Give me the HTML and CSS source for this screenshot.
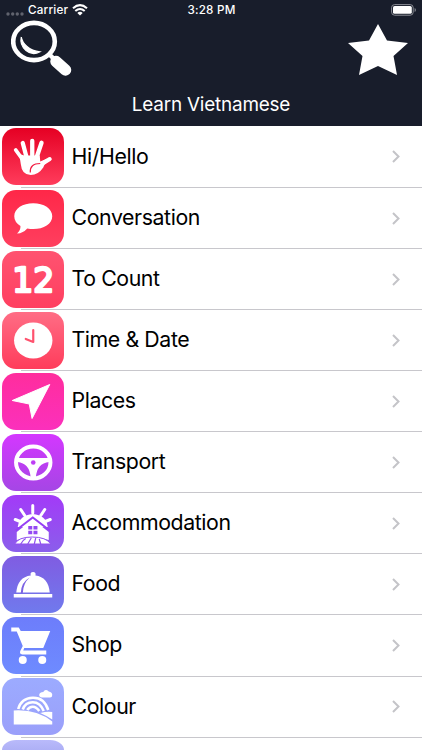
FILE: index.html
```html
<!DOCTYPE html>
<html lang="en">
<head>
  <meta charset="UTF-8" />
  <meta name="viewport" content="width=device-width, initial-scale=1.0"/>
  <title>Learn Vietnamese</title>
  <link rel="stylesheet" href="styles.css">
</head>
<body>
  <header class="header">
    <div class="status">
      <div class="status-left">
        <svg class="signal" width="18" height="4" viewBox="0 0 18 4"><circle cx="2" cy="2" r="1.7"/><circle cx="6.7" cy="2" r="1.7"/><circle cx="11.3" cy="2" r="1.7"/><circle cx="16" cy="2" r="1.7"/></svg>
        <span class="carrier">Carrier</span>
        <svg class="wifi" width="16" height="12" viewBox="0 0 16 12"><path d="M1 4.2Q8-1.8 15 4.2M3.3 7Q8 3 12.7 7" fill="none" stroke="#fff" stroke-width="2.1"/><path d="M5.3 8.9Q8 6.6 10.7 8.9L8 11.6Z" fill="#fff"/></svg>
      </div>
      <span class="time">3:28 PM</span>
      <svg class="battery" width="26" height="12" viewBox="0 0 26 12"><rect x=".6" y=".6" width="21.6" height="10.6" rx="3" fill="none" stroke="#8b8d95"/><rect x="2" y="2" width="18.8" height="7.8" rx="1.6" fill="#fff"/><path d="M23.6 4v4q1.3-.6 1.3-2t-1.3-2" fill="#8b8d95"/></svg>
    </div>
    <div class="actions">
      <svg width="62" height="56" viewBox="0 0 62 56"><ellipse cx="23" cy="21.5" rx="20.8" ry="18.6" fill="none" stroke="#fff" stroke-width="4.6"/><path d="M10.3 17Q8.5 25 15 30.5T29 31.8Q21 31 16 26.5T10.3 17" fill="#fff" stroke="#fff" stroke-width="1.2"/><path d="M37 33L42 38" stroke="#fff" stroke-width="4.5"/><path d="M45 41.5L54.5 50" stroke="#fff" stroke-width="11.5" stroke-linecap="round"/></svg>
      <svg class="star" width="62" height="52" viewBox="0 0 62 52"><path d="M31 0L40 16.5L61 19L46.5 32L50 51L31 42L12 51L15.5 32L1 19L22 16.5Z" fill="#fff"/></svg>
    </div>
    <h1>Learn Vietnamese</h1>
  </header>

  <main class="list">
    <div class="row">
      <div class="icon hello">
        <svg viewBox="0 0 61 57"><g stroke="#fff" fill="none" stroke-linecap="round"><path d="M20 31L13.5 22" stroke-width="3.8"/><path d="M24.500 30L20.5 15M30 28V12.8M34.5 29L39.300 14.8" stroke-width="4.3"/><path d="M38 37L47.5 31" stroke-width="4"/></g><path d="M17 26L22 27.5H37.5L38 33.5L45 30.5L41 39.5Q36 47 28.5 47Q19.5 47 18.5 36Z" fill="#fff"/><path d="M28 44.5Q27.5 35.5 38 35.5" fill="none" stroke="#f21c42" stroke-width="1.2"/></svg>
      </div>
      <span class="label">Hi/Hello</span>
      <svg class="chevron" viewBox="0 0 8 13"><path d="M1 1L6.5 6.5L1 12"/></svg>
    </div>
    <div class="row">
      <div class="icon conversation">
        <svg viewBox="0 0 61 57"><path d="M31 13.2C41.5 13.2 50 18.5 50 26.2S41.5 39 31 39Q28 39 25 38.4Q21 43 14.8 43.6Q18.5 40 18.2 36Q12 32 12 26.2C12 18.5 20.5 13.2 31 13.2Z" fill="#fff"/></svg>
      </div>
      <span class="label">Conversation</span>
      <svg class="chevron" viewBox="0 0 8 13"><path d="M1 1L6.5 6.5L1 12"/></svg>
    </div>
    <div class="row">
      <div class="icon count">
        <svg viewBox="0 0 61 57"><text x="10" y="40.5">12</text></svg>
      </div>
      <span class="label">To Count</span>
      <svg class="chevron" viewBox="0 0 8 13"><path d="M1 1L6.5 6.5L1 12"/></svg>
    </div>
    <div class="row">
      <div class="icon clock">
        <svg viewBox="0 0 61 57"><ellipse cx="31" cy="28.5" rx="19.2" ry="18" fill="#fff"/><path d="M31 18V30L23.5 27" fill="none" stroke="#ff526e" stroke-width="2.2" stroke-linecap="round" stroke-linejoin="round"/></svg>
      </div>
      <span class="label">Time &amp; Date</span>
      <svg class="chevron" viewBox="0 0 8 13"><path d="M1 1L6.5 6.5L1 12"/></svg>
    </div>
    <div class="row">
      <div class="icon places">
        <svg viewBox="0 0 61 57"><path d="M47.5 11.5L29.8 45.500L27 31L10 27.5Z" fill="#fff" stroke="#fff" stroke-linejoin="round"/></svg>
      </div>
      <span class="label">Places</span>
      <svg class="chevron" viewBox="0 0 8 13"><path d="M1 1L6.5 6.5L1 12"/></svg>
    </div>
    <div class="row">
      <div class="icon transport">
        <svg viewBox="0 0 61 57"><ellipse cx="31" cy="28.5" rx="17.2" ry="16" fill="none" stroke="#fff" stroke-width="4"/><path d="M15 24H47V28Q34.5 29 33.5 44H28.500Q27.5 29 15 28Z" fill="#fff"/><circle cx="31" cy="28.500" r="2.3" fill="#bd3df4"/></svg>
      </div>
      <span class="label">Transport</span>
      <svg class="chevron" viewBox="0 0 8 13"><path d="M1 1L6.5 6.5L1 12"/></svg>
    </div>
    <div class="row">
      <div class="icon accommodation">
        <svg viewBox="0 0 61 57"><path d="M30.5 18V10.5M22.5 20.5L18.5 14.5M38.5 20.5L42.5 14.5M18 26.5L13 24.5M43 26.5L48 24.5" stroke="#fff" stroke-width="3" stroke-linecap="round"/><path d="M15.5 32Q17 20 30.5 19Q44 20 45.5 32Z" fill="#fff"/><path d="M13.5 35.5L30.5 22.5L47.5 35.5" fill="none" stroke="#963ff5" stroke-width="2"/><path d="M14.5 37L30.5 24.5L46.5 37V45Q31 39.5 14.5 45Z" fill="#fff"/><path d="M26 31h4v3.5h-4zM31.2 31h4v3.5h-4zM26 35.8h4v3.5h-4zM31.2 35.8h4v3.5h-4z" fill="#9449f3"/><path d="M12.5 49Q16 42 30 42T48.5 49Z" fill="#fff" stroke="#9150f0" stroke-width="1"/><path d="M18.5 49Q20 45.5 23.5 43.5M25.5 49L29 43M32 49L33.5 43M38.5 49L37 44" fill="none" stroke="#9150f0" stroke-width="1.2"/></svg>
      </div>
      <span class="label">Accommodation</span>
      <svg class="chevron" viewBox="0 0 8 13"><path d="M1 1L6.5 6.5L1 12"/></svg>
    </div>
    <div class="row">
      <div class="icon food">
        <svg viewBox="0 0 61 57"><path d="M11.5 38H50V41.5H11.5ZM14 36.5Q15.5 21 28.5 19.5Q27.5 16 30.8 16T33.2 19.5Q46 21 47.5 36.5Z" fill="#fff"/><path d="M18.5 37Q19 26 27.5 21.5Q21 27 20.5 37Z" fill="#7b62e3"/></svg>
      </div>
      <span class="label">Food</span>
      <svg class="chevron" viewBox="0 0 8 13"><path d="M1 1L6.5 6.5L1 12"/></svg>
    </div>
    <div class="row">
      <div class="icon shop">
        <svg viewBox="0 0 61 57"><path d="M9 10.5H16.5L18.5 14H48L41 31H22L21 33.5H44V37.5H20Q17 37 18 34L20.5 29L14.5 14.5H9Z" fill="#fff"/><circle cx="20.5" cy="43" r="4" fill="#fff"/><circle cx="40" cy="43" r="4" fill="#fff"/></svg>
      </div>
      <span class="label">Shop</span>
      <svg class="chevron" viewBox="0 0 8 13"><path d="M1 1L6.5 6.5L1 12"/></svg>
    </div>
    <div class="row">
      <div class="icon colour">
        <svg viewBox="0 0 61 57"><g fill="none" stroke="#fff" stroke-width="2.6"><path d="M16 31Q19 20 30.5 19.7T46 32"/><path d="M20.5 31.5Q23 24.2 30.5 24.2T41.5 33"/><path d="M25 32Q27 28.7 30.5 28.7T37 33"/></g><path d="M11.5 32.5Q34 31 50 43.5V46.5H11.5ZM38 35Q45 33 50 34V41.5Q45 38 38 35" fill="#fff"/><path d="M40 19.5Q36.5 19 37 16.5T41 14Q43 10.5 46.5 13.5Q50 14 50 17T47 19.5Z" fill="#fff"/></svg>
      </div>
      <span class="label">Colour</span>
      <svg class="chevron" viewBox="0 0 8 13"><path d="M1 1L6.5 6.5L1 12"/></svg>
    </div>
    <div class="row partial">
      <div class="icon last"></div>
    </div>
  </main>
</body>
</html>
```
FILE: styles.css
```css
* {
  box-sizing: border-box;
}

body {
  margin: 0;
  height: 100vh;
  overflow: hidden;
  background: #fff;
  color: #000;
  font-family: Inter, "Liberation Sans", sans-serif;
}

.header {
  height: 126px;
  background: #181d2b;
  color: #fff;
}

.status {
  height: 20px;
  display: grid;
  grid-template-columns: 1fr auto 1fr;
  align-items: center;
  padding: 0 5px 0 6px;
  font-size: 11.7px;
  font-weight: 500;
  letter-spacing: 0.2px;
}

.status-left {
  display: flex;
  align-items: center;
}

.signal {
  fill: #60636e;
  margin: 7px 4px 0 0;
}

.wifi {
  margin-left: 4px;
}

.battery {
  justify-self: end;
}

.actions {
  height: 68px;
  display: flex;
  justify-content: space-between;
  padding: 0 13px 0 11px;
}

.star {
  margin-top: 4px;
}

h1 {
  margin: 0;
  padding-top: 5px;
  text-align: center;
  font-size: 18.9px;
  line-height: 24px;
  font-weight: 400;
  letter-spacing: -0.2px;
}

.list {
  height: 624px;
  padding-top: 0.7px;
  overflow: hidden;
}

.row {
  height: 61.1px;
  display: flex;
  align-items: center;
  padding: 0 22px 0.6px 2px;
  background: linear-gradient(#c8c7cc, #c8c7cc) 21px 100% / 100% 1px no-repeat;
}

.icon {
  width: 61.5px;
  height: 57px;
  flex: none;
  display: flex;
  border-radius: 14px;
  overflow: hidden;
}

.icon svg {
  width: 100%;
  height: 100%;
}

.label {
  flex: 1;
  margin-left: 8px;
  padding-bottom: 2.4px;
  font-size: 21.3px;
  line-height: 28px;
  letter-spacing: -0.4px;
}

.chevron {
  width: 8px;
  height: 13px;
  fill: none;
  stroke: #c4c4c8;
  stroke-width: 2;
}

.hello {
  background: linear-gradient(#e50023, #ff3c5c);
}

.conversation {
  background: linear-gradient(#ff2748, #ff3f5f);
}

.count {
  background: linear-gradient(#ff5370, #ff3f60);
}

.count text {
  fill: #fff;
  stroke: #fff;
  stroke-width: 2.4;
  stroke-linejoin: round;
  font-family: "DejaVu Sans", sans-serif;
  font-size: 33px;
}

.clock {
  background: linear-gradient(#ff6d85, #ff3c5b);
}

.places {
  background: linear-gradient(#ff2d9d, #fb30bc);
}

.transport {
  background: linear-gradient(#d437ff, #a546e5);
}

.accommodation {
  background: linear-gradient(#a33af8, #8a5eeb);
}

.food {
  background: linear-gradient(#805ce2, #707aed);
}

.shop {
  background: linear-gradient(#6d7dfb, #6e8bff);
}

.colour {
  background: linear-gradient(#9cabff, #9a9ffa);
}

/* only the top of this row fits on the screen */
.partial {
  height: 12px;
  align-items: flex-start;
  padding-top: 2px;
  background: none;
}

.last {
  height: 10px;
  border-radius: 14px 14px 0 0 / 10px 10px 0 0;
  background: linear-gradient(#b9bafb, #aeb0f6);
}
```
